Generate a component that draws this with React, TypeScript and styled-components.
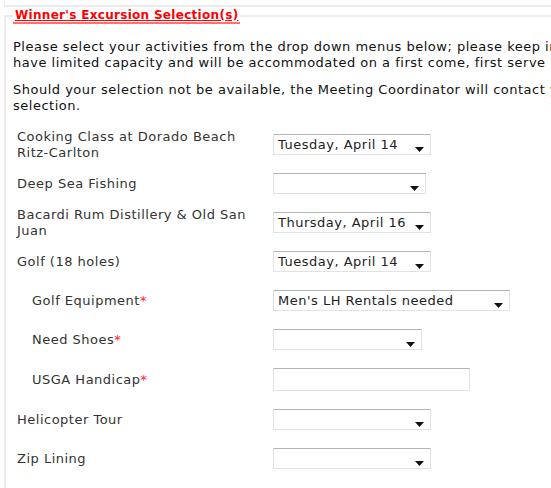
import styled, { createGlobalStyle } from 'styled-components';

const GlobalStyle = createGlobalStyle`
  body {
    margin: 0;
    background: #fff;
    overflow: hidden;
    font-family: "DejaVu Sans", Verdana, sans-serif;
  }
`;

type Row = {
  label: string[];
  required?: boolean;
  indent?: boolean;
  value?: string;
  width: number;
  input?: boolean;
};

const rows: Row[] = [
  { label: ['Cooking Class at Dorado Beach', 'Ritz-Carlton'], value: 'Tuesday, April 14', width: 158 },
  { label: ['Deep Sea Fishing'], width: 153 },
  { label: ['Bacardi Rum Distillery & Old San', 'Juan'], value: 'Thursday, April 16', width: 158 },
  { label: ['Golf (18 holes)'], value: 'Tuesday, April 14', width: 158 },
  { label: ['Golf Equipment'], required: true, indent: true, value: "Men's LH Rentals needed", width: 237 },
  { label: ['Need Shoes'], required: true, indent: true, width: 149 },
  { label: ['USGA Handicap'], required: true, indent: true, width: 197, input: true },
  { label: ['Helicopter Tour'], width: 158 },
  { label: ['Zip Lining'], width: 158 },
];

export default function App() {
  return (
    <Page>
      <GlobalStyle />
      <PrevPanel />
      <Fieldset>
        <Legend>Winner's Excursion Selection(s)</Legend>
        <Intro>
          Please select your activities from the drop down menus below; please keep in mind that some activities
          <br />
          have limited capacity and will be accommodated on a first come, first serve basis.
        </Intro>
        <Intro>
          Should your selection not be available, the Meeting Coordinator will contact you to make another
          <br />
          selection.
        </Intro>

        <Form>
          {rows.map((r) => (
            <FormRow key={r.label.join(' ')} $tall={r.input}>
              <Label $indent={r.indent}>
                {r.label.map((line, i) => (
                  <span key={line}>
                    {i > 0 && <br />}
                    {line}
                  </span>
                ))}
                {r.required && <Star>*</Star>}
              </Label>
              {r.input ? (
                <TextBox $w={r.width} />
              ) : (
                <Dropdown $w={r.width}>
                  <span>{r.value}</span>
                  <svg width="9" height="5" viewBox="0 0 9 5">
                    <path d="M0 0h9L4.5 5z" fill="#111" />
                  </svg>
                </Dropdown>
              )}
            </FormRow>
          ))}
        </Form>
      </Fieldset>
    </Page>
  );
}

const Page = styled.div`
  width: 640px;
  height: 488px;
  padding-left: 4px;
`;

// bottom of the panel above
const PrevPanel = styled.div`
  height: 5px;
  border-left: 1px solid #e8e8e8;
  border-bottom: 2px solid #ececec;
`;

const Fieldset = styled.fieldset`
  margin: 1px 0 0 0;
  padding: 0 0 0 7px;
  border: none;
  border-top: 2px solid #ececec;
  border-left: 2px solid #ececec;
  min-height: 500px;
`;

const Legend = styled.legend`
  padding: 0 2px;
  font-size: 12px;
  font-weight: bold;
  letter-spacing: 0.3px;
  color: #ff0000;
  text-decoration: underline;
  line-height: 14px;
  border-bottom: 2px solid #ff7070;
`;

const Intro = styled.p`
  margin: 15px 0 0 0;
  font-size: 13px;
  line-height: 16px;
  letter-spacing: 0.5px;
  color: #111;
  white-space: nowrap;

  & + & {
    margin-top: 11px;
  }
`;

const Form = styled.div`
  margin-top: 11px;
  display: flex;
  flex-direction: column;
`;

const FormRow = styled.div<{ $tall?: boolean }>`
  display: grid;
  grid-template-columns: 256px auto;
  align-items: center;
  height: ${(p) => (p.$tall ? 41 : 39)}px;
  padding-left: 4px;
`;

const Label = styled.div<{ $indent?: boolean }>`
  padding-left: ${(p) => (p.$indent ? 15 : 0)}px;
  font-size: 13px;
  line-height: 16px;
  letter-spacing: 0.5px;
  color: #333;
`;

const Star = styled.span`
  color: #ff2020;
`;

const Dropdown = styled.div<{ $w: number }>`
  box-sizing: border-box;
  width: ${(p) => p.$w}px;
  height: 21px;
  display: flex;
  justify-content: space-between;
  align-items: center;
  padding: 0 6px 0 4px;
  border: 1px solid #e2e2e2;
  border-top-color: #b4b4b4;
  font-size: 13px;
  letter-spacing: 0.5px;
  color: #222;
  white-space: nowrap;

  svg {
    align-self: flex-end;
    margin-bottom: 2px;
  }
`;

const TextBox = styled.div<{ $w: number }>`
  box-sizing: border-box;
  width: ${(p) => p.$w}px;
  height: 23px;
  border: 1px solid #e2e2e2;
  border-top-color: #b4b4b4;
`;
